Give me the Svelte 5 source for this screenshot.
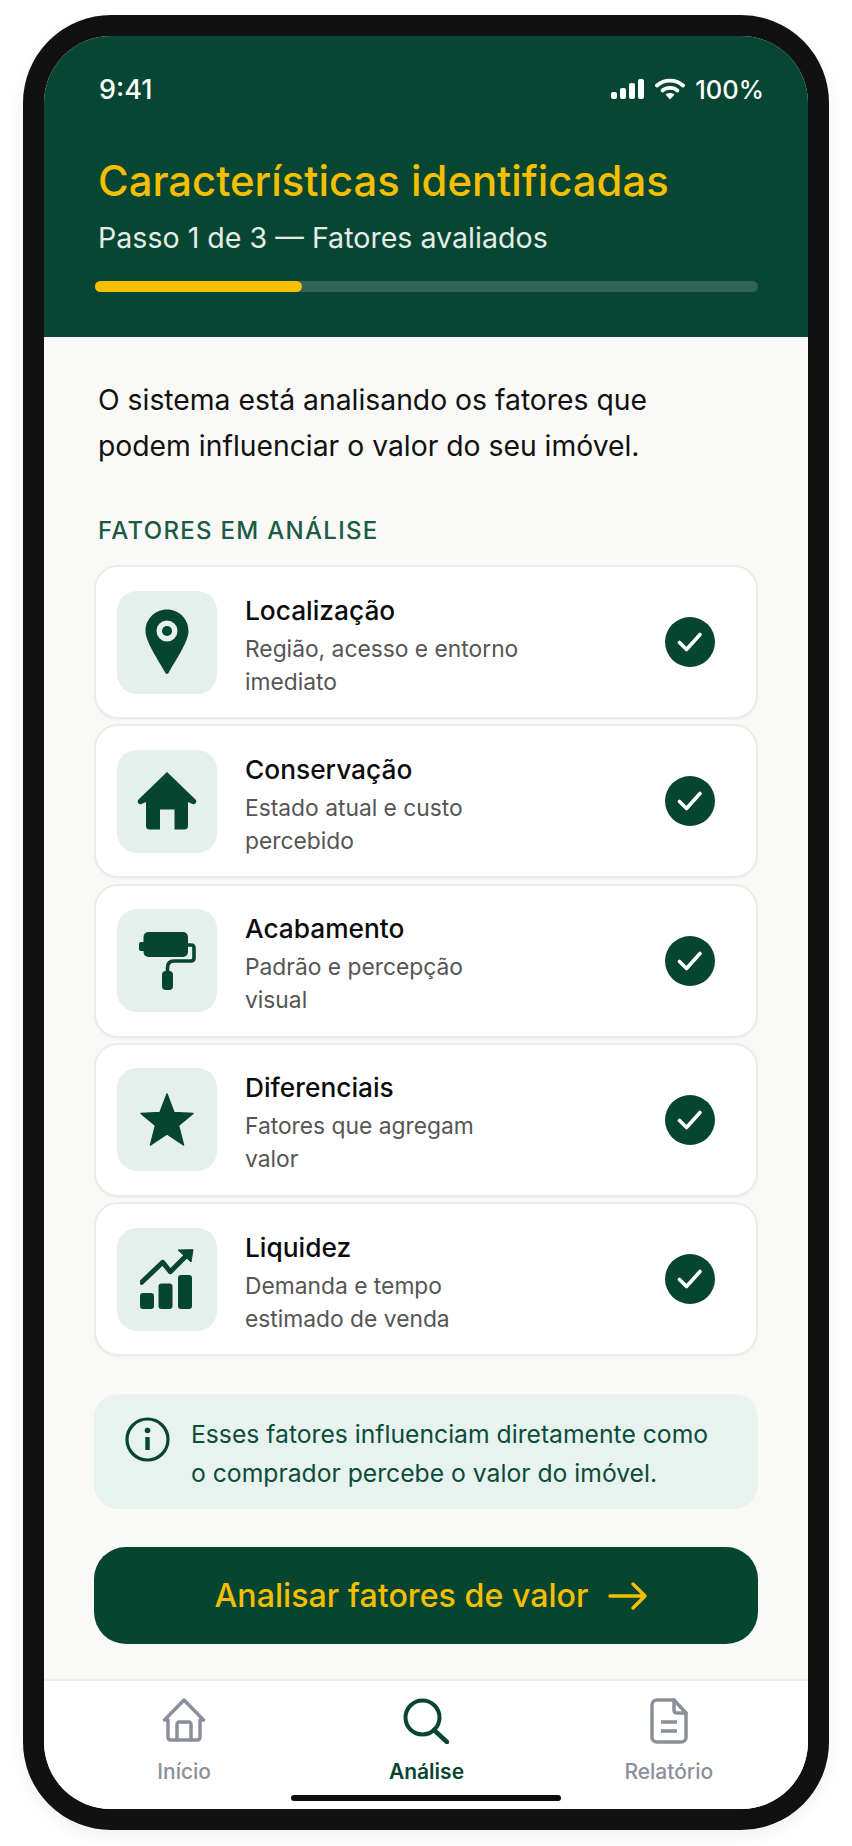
<script>
	const factors = [
		{ id: 'pin', title: 'Localização', lines: ['Região, acesso e entorno', 'imediato'] },
		{ id: 'house', title: 'Conservação', lines: ['Estado atual e custo', 'percebido'] },
		{ id: 'roller', title: 'Acabamento', lines: ['Padrão e percepção', 'visual'] },
		{ id: 'star', title: 'Diferenciais', lines: ['Fatores que agregam', 'valor'] },
		{ id: 'chart', title: 'Liquidez', lines: ['Demanda e tempo', 'estimado de venda'] }
	];
</script>

<div class="page">
	<div class="phone">
		<div class="screen">
			<header>
				<div class="status">
					<span class="time">9:41</span>
					<div class="status-right">
						<svg width="34" height="20" viewBox="0 0 34 20" fill="#fff">
							<rect x="0" y="13" width="6" height="7" rx="2" />
							<rect x="9" y="9" width="6" height="11" rx="2" />
							<rect x="18" y="4" width="6" height="16" rx="2" />
							<rect x="27" y="0" width="6" height="20" rx="2" />
						</svg>
						<svg width="30" height="22" viewBox="0 0 30 22" fill="none" stroke="#fff" stroke-width="3.8" stroke-linecap="round">
							<path d="M2 7.500C9.500 1 20.500 1 28 7.500" />
							<path d="M7.500 12.500C11.500 9 18.500 9 22.500 12.500" />
							<path d="M10.500 16.500L15 21.500L19.500 16.500C17 14.500 13 14.500 10.500 16.500Z" fill="#fff" stroke="none" />
						</svg>
						<span>100%</span>
					</div>
				</div>
				<h1>Características identificadas</h1>
				<p class="step">Passo 1 de 3 — Fatores avaliados</p>
				<div class="progress"><div class="progress-fill"></div></div>
			</header>

			<main>
				<p class="intro">O sistema está analisando os fatores que<br />podem influenciar o valor do seu imóvel.</p>
				<h2>FATORES EM ANÁLISE</h2>

				<div class="cards">
					{#each factors as f}
						<div class="card">
							<div class="tile">
								{#if f.id === 'pin'}
									<svg width="44" height="66" viewBox="0 0 44 66">
										<path fill="#06452f" fill-rule="evenodd" d="M22 0.500C10 0.500 0.500 10 0.500 22C0.500 33 14 52 20.500 64C21.200 65.400 22.800 65.400 23.500 64C30 52 43.500 33 43.500 22C43.500 10 34 0.500 22 0.500ZM22 11.500A10.500 10.500 0 1 1 22 32.500A10.500 10.500 0 1 1 22 11.500Z" />
										<circle cx="22" cy="22" r="5" fill="#06452f" />
									</svg>
								{:else if f.id === 'house'}
									<svg width="60" height="58" viewBox="0 0 60 58">
										<path fill="#06452f" d="M30 0L58.500 27.500C60.500 29.800 58.500 33 55.500 32L51 30V54C51 56.500 49.500 57.500 47.500 57.500H37.500V37.500H23V57.500H12.500C10.500 57.500 9 56.500 9 54V30L4.500 32C1.500 33 -0.500 29.800 1.500 27.500Z" />
									</svg>
								{:else if f.id === 'roller'}
									<svg width="57" height="58" viewBox="0 0 57 58" fill="#06452f">
										<rect x="0" y="10" width="7" height="9" rx="2" />
										<rect x="4.500" y="0" width="44.500" height="25" rx="5" />
										<path d="M48 13H52Q55 13 55 16V26Q55 29 52 29H35Q28.500 29 28.500 36V42" fill="none" stroke="#06452f" stroke-width="3.600" />
										<rect x="23" y="39" width="11" height="19" rx="4" />
									</svg>
								{:else if f.id === 'star'}
									<svg width="54" height="54" viewBox="0 0 54 54">
										<path fill="#06452f" stroke="#06452f" stroke-width="1.500" stroke-linejoin="round" d="M27 1L34 19.500L53 20.500L38.500 32.500L43.500 52L27 41L10.500 52L15.500 32.500L1 20.500L20 19.500Z" />
									</svg>
								{:else}
									<svg width="54" height="60" viewBox="0 0 54 60" fill="#06452f">
										<path d="M1.700 33.300L22.700 13.300L30.300 22.700L46 7" fill="none" stroke="#06452f" stroke-width="5" stroke-linecap="round" stroke-linejoin="round" />
										<path d="M38 1L53 0.700L51 13Z" stroke="#06452f" stroke-width="1" stroke-linejoin="round" />
										<rect x="0" y="44" width="14" height="16" rx="3" />
										<rect x="18.500" y="34.500" width="14" height="25.500" rx="3" />
										<rect x="38" y="26" width="14" height="34" rx="3" />
									</svg>
								{/if}
							</div>
							<div class="card-text">
								<div class="card-title">{f.title}</div>
								<div class="card-desc">{f.lines[0]}<br />{f.lines[1]}</div>
							</div>
							<div class="check">
								<svg width="26" height="22" viewBox="0 0 26 22" fill="none" stroke="#fff" stroke-width="3.600" stroke-linecap="round" stroke-linejoin="round">
									<path d="M2.500 11.500L9.500 18.500L23 3.500" />
								</svg>
							</div>
						</div>
					{/each}
				</div>

				<div class="info">
					<svg width="45" height="45" viewBox="0 0 45 45" fill="none" stroke="#06452f" stroke-width="3.200">
						<circle cx="22.500" cy="22.500" r="20.500" />
						<path d="M22.500 20V33" stroke-width="4.400" />
						<circle cx="22.500" cy="13.500" r="2.800" fill="#06452f" stroke="none" />
					</svg>
					<p>Esses fatores influenciam diretamente como<br />o comprador percebe o valor do imóvel.</p>
				</div>

				<button class="cta">
					<span>Analisar fatores de valor</span>
					<svg width="40" height="30" viewBox="0 0 40 30" fill="none" stroke="#f5bf00" stroke-width="3.400" stroke-linecap="round" stroke-linejoin="round">
						<path d="M2 15H37M25 3L37 15L25 27" />
					</svg>
				</button>
			</main>

			<nav>
				<div class="tab">
					<svg width="44" height="44" viewBox="0 0 44 44" fill="none" stroke="#8b8f9a" stroke-width="3.500" stroke-linejoin="round">
						<path d="M2.500 22L22 2L41.500 22H38V39C38 41 37 42 35 42H9C7 42 6 41 6 39V22Z" />
						<path d="M15 42V26C15 25 16 24 17 24H27C28 24 29 25 29 26V42" />
					</svg>
					<span>Início</span>
				</div>
				<div class="tab active">
					<svg width="46" height="46" viewBox="0 0 46 46" fill="none" stroke="#06452f" stroke-width="4" stroke-linecap="round">
						<circle cx="19.500" cy="19.500" r="17" />
						<path d="M31 32L44 44" stroke-width="4.500" />
					</svg>
					<span>Análise</span>
				</div>
				<div class="tab">
					<svg width="38" height="46" viewBox="0 0 38 46" fill="none" stroke="#8b8f9a" stroke-width="3.500" stroke-linejoin="round" stroke-linecap="round">
						<path d="M7 2H24L36 15V39C36 42 34 44 31 44H7C4 44 2 42 2 39V7C2 4 4 2 7 2Z" />
						<path d="M24 2V12C24 14 25 15 27 15H36" />
						<path d="M11 24H27M11 33H27" stroke-linecap="butt" />
					</svg>
					<span>Relatório</span>
				</div>
			</nav>
			<div class="home-bar"></div>
		</div>
	</div>
</div>

<style>
	:global(body) {
		margin: 0;
		background: #fff;
		font-family: Inter, "Noto Sans", sans-serif;
	}
	.page {
		width: 852px;
		height: 1846px;
		padding: 15px 23px 0;
		box-sizing: border-box;
	}
	.phone {
		width: 806px;
		height: 1815px;
		box-sizing: border-box;
		border: 21px solid #111;
		border-radius: 88px;
		box-shadow: 0 6px 16px rgba(0, 0, 0, 0.06);
		background: #111;
	}
	.screen {
		position: relative;
		height: 100%;
		border-radius: 67px;
		overflow: hidden;
		background: #f9f9f7;
		display: flex;
		flex-direction: column;
	}
	header {
		background: #064632;
		height: 301px;
		box-sizing: border-box;
		padding: 37px 50px 0 54px;
		flex: none;
	}
	.status {
		display: flex;
		justify-content: space-between;
		align-items: center;
		color: #fff;
		font-size: 25.500px;
		font-weight: 500;
		height: 32px;
		margin: 0 -6px 0 1px;
	}
	.time {
		font-size: 27px;
	}
	.status-right {
		display: flex;
		align-items: center;
		gap: 10px;
	}
	h1 {
		margin: 51px 0 0;
		color: #f5bf00;
		font-size: 41.800px;
		font-weight: 500;
		line-height: 50px;
	}
	.step {
		margin: 13px 0 0;
		color: #e4ece8;
		font-size: 28.600px;
		line-height: 38px;
	}
	.progress {
		margin: 24px 0 0 -3px;
		height: 11px;
		border-radius: 6px;
		background: #316453;
	}
	.progress-fill {
		width: 207px;
		height: 100%;
		border-radius: 6px;
		background: #f5bf00;
	}
	main {
		flex: 1;
		padding: 40px 50px 0;
	}
	.intro {
		margin: 0 0 0 4px;
		font-size: 28.300px;
		line-height: 46px;
		color: #111;
	}
	h2 {
		margin: 46px 0 0 4px;
		font-size: 24px;
		font-weight: 500;
		line-height: 32px;
		letter-spacing: 1.300px;
		color: #1c5a45;
	}
	.cards {
		display: flex;
		flex-direction: column;
		gap: 5.250px;
		margin-top: 18px;
	}
	.card {
		height: 154px;
		box-sizing: border-box;
		display: flex;
		align-items: center;
		padding: 0 41px 0 21px;
		background: #fff;
		border: 2px solid #ececea;
		border-radius: 24px;
		box-shadow: 0 1px 2px rgba(0, 0, 0, 0.04);
	}
	.tile {
		width: 100px;
		height: 103px;
		border-radius: 20px;
		background: #e5f0ed;
		display: flex;
		align-items: center;
		justify-content: center;
		flex: none;
	}
	.card-text {
		margin-left: 28px;
		padding-top: 7px;
		flex: 1;
	}
	.card-title {
		font-size: 26.300px;
		font-weight: 500;
		line-height: 34px;
		color: #0c0c0c;
	}
	.card-desc {
		margin-top: 4px;
		font-size: 22.800px;
		line-height: 33px;
		color: #555;
	}
	.check {
		width: 50px;
		height: 50px;
		border-radius: 50%;
		background: #06452f;
		display: flex;
		align-items: center;
		justify-content: center;
	}
	.info {
		margin-top: 38px;
		height: 115px;
		box-sizing: border-box;
		border-radius: 24px;
		background: #e8f2ef;
		display: flex;
		align-items: flex-start;
		padding: 21px 0 0 31px;
		gap: 21px;
	}
	.info svg {
		margin-top: 2px;
		flex: none;
	}
	.info p {
		margin: 0;
		font-size: 24.700px;
		line-height: 38.500px;
		color: #0b4d38;
	}
	.cta {
		margin-top: 38px;
		width: 100%;
		height: 97px;
		border: none;
		border-radius: 32px;
		background: #06452f;
		color: #f5bf00;
		font-family: inherit;
		font-size: 32.200px;
		font-weight: 500;
		display: flex;
		align-items: center;
		justify-content: center;
		gap: 20px;
		padding: 0 0 0 11px;
	}
	nav {
		position: absolute;
		left: 0;
		right: 0;
		bottom: 0;
		height: 130px;
		background: #fff;
		border-top: 2px solid #ececea;
		display: grid;
		grid-template-columns: repeat(3, 1fr);
		padding: 17px 18px 0 19px;
		box-sizing: border-box;
	}
	.tab {
		display: flex;
		flex-direction: column;
		align-items: center;
		height: 86px;
		justify-content: space-between;
		color: #8b8f9a;
		font-size: 21px;
		font-weight: 500;
	}
	.tab.active {
		color: #06452f;
		font-weight: 600;
	}
	.home-bar {
		position: absolute;
		left: 247px;
		bottom: 8px;
		width: 270px;
		height: 6px;
		border-radius: 3px;
		background: #0c0c0c;
	}
</style>
